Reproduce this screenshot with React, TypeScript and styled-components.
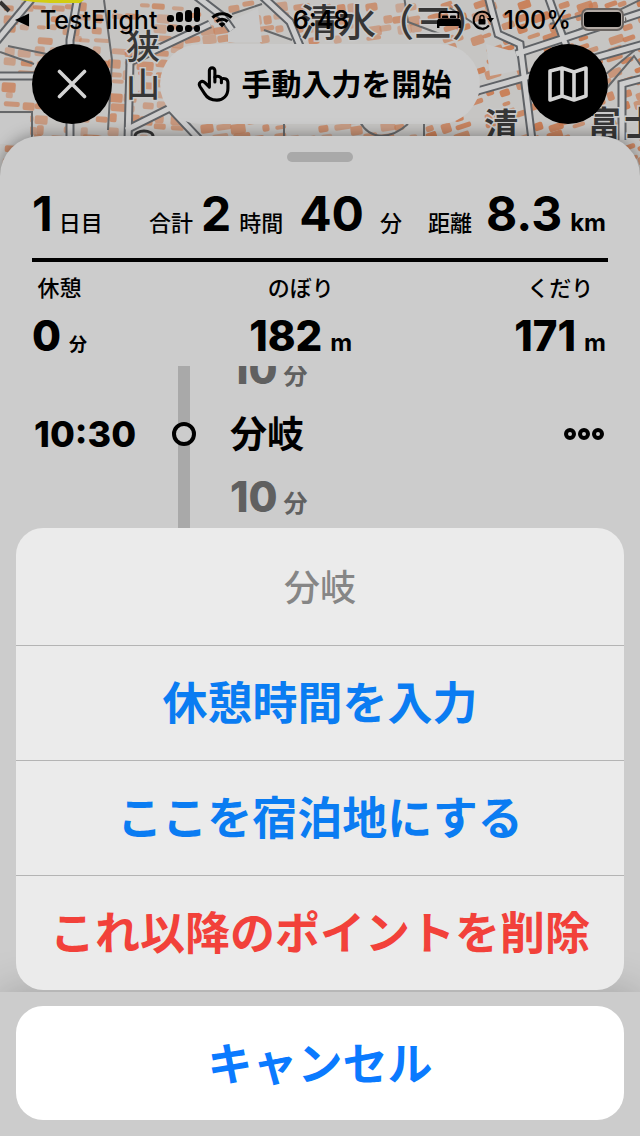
import React from "react";
import styled, { createGlobalStyle } from "styled-components";

const GlobalStyle = createGlobalStyle`
  *, *::before, *::after { box-sizing: border-box; }
  body {
    margin: 0;
    background: #cccccc;
    color: #000;
    font-family: Inter, "Noto Sans CJK JP", sans-serif;
  }
  button { font-family: inherit; border: 0; padding: 0; cursor: pointer; }
  svg { display: block; }
`;

const Page = styled.div`
  position: relative;
  display: flex;
  flex-direction: column;
  min-height: 100vh;
  overflow: hidden;
`;

const MapLayer = styled.svg`
  position: absolute;
  top: 0;
  left: 0;
  width: 100%;
  height: 200px;
`;

const StatusBar = styled.header`
  position: relative;
  display: grid;
  grid-template-columns: 1fr auto 1fr;
  align-items: center;
  height: 40px;
  padding: 0 12px 0 14px;
  font-size: 25px;
  font-weight: 500;
  line-height: 40px;
`;

const StatusGroup = styled.div<{ $end?: boolean }>`
  display: flex;
  align-items: center;
  justify-content: ${(p) => (p.$end ? "flex-end" : "flex-start")};
  gap: 10px;
`;

const Clock = styled.time`
  font-weight: 600;
`;

const Toolbar = styled.nav`
  position: relative;
  display: flex;
  align-items: center;
  justify-content: space-between;
  margin-top: 4px;
  padding: 0 32px;
`;

const RoundButton = styled.button`
  display: flex;
  align-items: center;
  justify-content: center;
  width: 80px;
  height: 80px;
  border-radius: 50%;
  background: #000;
  color: #d4d4d4;
`;

const PillButton = styled.button`
  display: flex;
  align-items: center;
  justify-content: center;
  gap: 12px;
  width: 320px;
  height: 80px;
  padding-left: 8px;
  border-radius: 40px;
  background: #cccccc;
  color: #000;
  font-size: 30px;
  font-weight: 700;
`;

const PillLabel = styled.span`
  padding-bottom: 4px;
`;

const Sheet = styled.main`
  position: relative;
  display: flex;
  flex: 1;
  flex-direction: column;
  margin-top: 12px;
  border-radius: 40px 40px 0 0;
  background: #cccccc;
  box-shadow: 0 0 16px rgba(0, 0, 0, 0.4);
`;

const Handle = styled.div`
  width: 66px;
  height: 10px;
  margin: 16px auto 0;
  border-radius: 5px;
  background: #a9a9a9;
`;

const Summary = styled.section`
  display: flex;
  align-items: baseline;
  justify-content: space-between;
  height: 100px;
  margin: 0 32px;
  padding: 20px 2px 0 0;
  border-bottom: 4px solid #000;
  line-height: 64px;
`;

const Totals = styled.div`
  display: flex;
  align-items: baseline;
  gap: 26px;
`;

const Measure = styled.div<{ $gap: number }>`
  display: flex;
  align-items: baseline;
  gap: ${(p) => p.$gap}px;
`;

const Figure = styled.span<{ $size: number }>`
  font-size: ${(p) => p.$size}px;
  font-weight: ${(p) => (p.$size > 42 ? 700 : 800)};
`;

const Unit = styled.span<{ $size?: number; $bold?: boolean }>`
  font-size: ${(p) => p.$size ?? 22}px;
  font-weight: ${(p) => (p.$bold ? 700 : 500)};
`;

const Stats = styled.dl`
  display: flex;
  justify-content: space-between;
  margin: 0 32px;
  padding: 10px 2px 6px 0;
`;

const Stat = styled.div`
  display: flex;
  flex-direction: column;
  align-items: center;
  gap: 8px;
`;

const StatLabel = styled.dt`
  font-size: 22px;
  font-weight: 500;
  line-height: 32px;
`;

const StatValue = styled.dd`
  display: flex;
  align-items: baseline;
  gap: 8px;
  height: 48px;
  margin: 0;
  line-height: 48px;
`;

const Timeline = styled.div`
  flex: 1;
  overflow: hidden;
`;

const Stops = styled.ol`
  margin: -28px 0 0;
  padding: 0;
  list-style: none;
`;

const StopRow = styled.li`
  display: grid;
  grid-template-columns: 136px 32px 1fr auto;
  align-items: center;
  height: 64px;
  padding: 0 32px;
`;

const StopTime = styled.time`
  padding-left: 2px;
  font-size: 36px;
  font-weight: 800;
`;

const Track = styled.div`
  display: flex;
  align-items: center;
  justify-content: center;
  height: 64px;
  background: linear-gradient(#a9a9a9, #a9a9a9) center / 12px 100% no-repeat;
`;

const Node = styled.span`
  width: 24px;
  height: 24px;
  border: 4px solid #000;
  border-radius: 50%;
  background: #cccccc;
`;

const StopName = styled.span`
  padding: 0 0 4px 30px;
  font-size: 37px;
  font-weight: 700;
`;

const Leg = styled.div`
  display: flex;
  align-items: baseline;
  gap: 6px;
  padding: 4px 0 0 30px;
  color: #606060;
  line-height: 48px;
`;

const MoreButton = styled.button`
  display: flex;
  align-items: center;
  height: 44px;
  padding: 0 4px;
  background: none;
  color: #000;
`;

const BottomBar = styled.footer`
  height: 144px;
  background: #cccccc;
  box-shadow: 0 0 40px rgba(0, 0, 0, 0.22);
`;

const ActionSheet = styled.div`
  position: absolute;
  right: 16px;
  bottom: 16px;
  left: 16px;
  display: flex;
  flex-direction: column;
  gap: 16px;
`;

const ActionGroup = styled.div`
  display: flex;
  flex-direction: column;
  overflow: hidden;
  border-radius: 27px;
  background: #ebebeb;
`;

const ActionTitle = styled.h2`
  margin: 0;
  padding-top: 4px;
  color: #868686;
  font-size: 36px;
  font-weight: 500;
  line-height: 113px;
  text-align: center;
`;

const ActionButton = styled.button<{ $danger?: boolean }>`
  height: 115px;
  padding-bottom: 6px;
  border-top: 1px solid #b4b4b4;
  background: none;
  color: ${(p) => (p.$danger ? "#f2413a" : "#0a7cf2")};
  font-size: 45px;
  font-weight: 700;
`;

const CancelButton = styled.button`
  height: 114px;
  padding-bottom: 4px;
  border-radius: 27px;
  background: #fff;
  color: #0a7aff;
  font-size: 45px;
  font-weight: 700;
`;

/* Small building footprints, scattered with a fixed seed so the map is stable. */
const buildings = (() => {
  let seed = 11;
  const next = () => {
    seed = (seed * 1103515245 + 12345) % 2147483648;
    return seed / 2147483648;
  };
  const list: { x: number; y: number; w: number; h: number; a: number; o: number }[] = [];
  for (let y = 2; y < 190; y += 11) {
    for (let x = 2; x < 640; x += 15) {
      if (next() < 0.3) continue;
      list.push({
        x: x + Math.round(next() * 6),
        y: y + Math.round(next() * 4),
        w: 7 + Math.round(next() * 10),
        h: 4 + Math.round(next() * 6),
        a: x > 420 ? -18 : x > 170 ? -8 : 4,
        o: (x > 420 ? 0.6 : 0.4) + next() * 0.35,
      });
    }
  }
  return list;
})();

const wideRoads = [
  "M-4 76H70",
  "M34 -4L-4 42",
  "M78 -4L70 40V140",
  "M196 -4L222 16 232 30",
  "M210 24L130 62 128 140",
  "M262 -4L290 22 300 46",
  "M488 -4L498 34 520 44 532 140",
  "M548 -4L566 46",
  "M644 44L474 92",
  "M644 12L516 54",
  "M126 130L170 108 200 140",
  "M622 140V84L644 78",
];

const thinRoads = [
  "M-4 112H32V140",
  "M0 52L34 64",
  "M8 46L66 58",
  "M104 0L112 60 108 130",
  "M232 14L262 4",
  "M264 30L292 40",
  "M284 120V140",
  "M360 122C370 140 390 140 408 124",
  "M424 124V140",
  "M404 -4L408 22 440 34",
  "M570 34L640 0",
  "M606 74L640 46",
  "M600 96L634 56 644 70",
  "M450 8L484 30",
  "M550 24L600 10",
];

function TownMap() {
  return (
    <MapLayer viewBox="0 0 640 200" preserveAspectRatio="xMidYMin slice" aria-hidden="true">
      <rect width="640" height="200" fill="#c6c5c3" />
      <g fill="#c97a50">
        {buildings.map((b, i) => (
          <rect
            key={i}
            x={b.x}
            y={b.y}
            width={b.w}
            height={b.h}
            rx="2"
            opacity={b.o}
            transform={`rotate(${b.a} ${b.x} ${b.y})`}
          />
        ))}
      </g>
      <g fill="#c9c9c9">
        <path d="M0 114h30v30H0zM228 22l30-14 4 34h-34zM486 44l30 8 4 18-30 6z" />
      </g>
      <g fill="none" stroke="#66686a" strokeWidth="2">
        {thinRoads.map((d) => (
          <path key={d} d={d} />
        ))}
      </g>
      <g fill="none" stroke="#5f6266" strokeWidth="9">
        {wideRoads.map((d) => (
          <path key={d} d={d} />
        ))}
      </g>
      <g fill="none" stroke="#cdcdcd" strokeWidth="5">
        {wideRoads.map((d) => (
          <path key={d} d={d} />
        ))}
      </g>
      <path d="M20 0H84L80 3H50L34 2Z" fill="#d2cc12" />
      <path d="M0 2L9 11" stroke="#333" strokeWidth="4" />
      <g
        fill="#363636"
        stroke="#c9c9c9"
        strokeWidth="3"
        paintOrder="stroke"
        fontFamily='"Noto Sans CJK JP", sans-serif'
        fontWeight="500"
      >
        <text x="126" y="59" fontSize="34">狭</text>
        <text x="126" y="97" fontSize="34">山</text>
        <text x="300" y="36" fontSize="38">清水（三）</text>
        <text x="484" y="138" fontSize="34" fontWeight="700">清</text>
        <text x="587" y="136" fontSize="34" fontWeight="700">富</text>
        <text x="624" y="136" fontSize="34" fontWeight="700">士</text>
      </g>
      <path d="M135 136a9 5 0 0 1 18 0" fill="none" stroke="#333" strokeWidth="3" />
    </MapLayer>
  );
}

const BackIcon = () => (
  <svg width="16" height="16" viewBox="0 0 17 16" aria-hidden="true">
    <path d="M1 8L16 1V15Z" fill="currentColor" />
  </svg>
);

const SignalIcon = () => (
  <svg width="34" height="26" viewBox="0 0 34 26" fill="currentColor" aria-hidden="true">
    <rect x="0" y="8" width="7" height="7" rx="3" />
    <rect x="9" y="5" width="7" height="10" rx="3" />
    <rect x="18" y="3" width="7" height="12" rx="3" />
    <rect x="27" y="0" width="6" height="15" rx="3" />
    <rect x="0" y="18" width="7" height="7" rx="3" />
    <rect x="9" y="18" width="7" height="7" rx="3" />
    <rect x="18" y="18" width="7" height="7" rx="3" />
    <rect x="27" y="18" width="6" height="7" rx="3" />
  </svg>
);

const WifiIcon = () => (
  <svg width="22" height="16" viewBox="0 0 22 16" aria-hidden="true">
    <g fill="none" stroke="currentColor" strokeWidth="3">
      <path d="M1.4 5.6a13.6 13.6 0 0 1 19.2 0" />
      <path d="M5.4 9.6a8 8 0 0 1 11.2 0" />
    </g>
    <path d="M11 15.5L7.6 12a4.8 4.8 0 0 1 6.8 0Z" fill="currentColor" />
  </svg>
);

const BedIcon = () => (
  <svg width="26" height="18" viewBox="0 0 26 18" aria-hidden="true">
    <path d="M3.5 7V3Q3.5 1 5.5 1H20.5Q22.5 1 22.5 3V7" fill="none" stroke="currentColor" strokeWidth="2" />
    <path d="M6 7V5.5Q6 4.500 7 4.500H11Q12 4.500 12 5.500V7ZM14 7V5.500Q14 4.500 15 4.500H19Q20 4.500 20 5.500V7Z" fill="currentColor" />
    <path d="M1 17V11Q1 7.500 4 7.500H22Q25 7.500 25 11V17H22.600V15H3.400V17Z" fill="currentColor" />
  </svg>
);

const RotationLockIcon = () => (
  <svg width="22" height="20" viewBox="0 0 22 20" aria-hidden="true">
    <path d="M18.4 8A8.500 8.500 0 1 0 17 15.300" fill="none" stroke="currentColor" strokeWidth="2" />
    <path d="M15 8H22L18.500 12.500Z" fill="currentColor" />
    <rect x="6.500" y="9" width="7" height="5.500" rx="1" fill="currentColor" />
    <path d="M8 9V7.500a2 2 0 0 1 4 0V9" fill="none" stroke="currentColor" strokeWidth="1.400" />
  </svg>
);

const BatteryIcon = () => (
  <svg width="47" height="24" viewBox="0 0 47 24" aria-hidden="true">
    <rect x="1" y="1" width="41" height="21" rx="6" fill="#b3aaa5" stroke="#6b6562" strokeWidth="2" />
    <rect x="3" y="4" width="37" height="15" rx="3" fill="currentColor" />
    <path d="M44 8.500q3 3 0 7z" fill="#6b6562" />
  </svg>
);

const CloseIcon = () => (
  <svg width="30" height="30" viewBox="0 0 30 30" aria-hidden="true">
    <path d="M2.500 2.500L27.500 27.500M27.500 2.500L2.500 27.500" stroke="currentColor" strokeWidth="3.600" strokeLinecap="round" />
  </svg>
);

const HandIcon = () => (
  <svg width="33" height="36" viewBox="0 0 96 104" aria-hidden="true">
    <g fill="none" stroke="currentColor" strokeWidth="9" strokeLinecap="round" strokeLinejoin="round">
      <path d="M36 54V13a8 8 0 0 1 16 0V32C60 27 69 30 71 37C79 34 90 37 90 48V64C90 86 76 99 58 99C38 99 29 92 22 80L9 60C2 48 14 40 23 48L36 61V54" />
      <path d="M52 32V46M71 37V48" />
    </g>
  </svg>
);

const MapIcon = () => (
  <svg width="40" height="36" viewBox="0 0 40 36" aria-hidden="true">
    <path
      d="M2 5L14 2L26 6L38 2V30L26 34L14 30L2 34ZM14 2V30M26 6V34"
      fill="none"
      stroke="currentColor"
      strokeWidth="3.600"
      strokeLinejoin="round"
    />
  </svg>
);

const MoreIcon = () => (
  <svg width="40" height="12" viewBox="0 0 40 12" aria-hidden="true">
    <g fill="none" stroke="currentColor" strokeWidth="4">
      <circle cx="6" cy="6" r="4" />
      <circle cx="20" cy="6" r="4" />
      <circle cx="34" cy="6" r="4" />
    </g>
  </svg>
);

const stats = [
  { label: "休憩", value: "0", unit: "分", size: 18 },
  { label: "のぼり", value: "182", unit: "m", size: 24 },
  { label: "くだり", value: "171", unit: "m", size: 24 },
];

function LegRow({ minutes }: { minutes: number }) {
  return (
    <StopRow>
      <span />
      <Track />
      <Leg>
        <Figure $size={42}>{minutes}</Figure>
        <Unit $size={24} $bold>分</Unit>
      </Leg>
    </StopRow>
  );
}

export default function App() {
  return (
    <Page>
      <GlobalStyle />
      <TownMap />
      <StatusBar>
        <StatusGroup>
          <BackIcon />
          <span>TestFlight</span>
          <SignalIcon />
          <WifiIcon />
        </StatusGroup>
        <Clock>6:48</Clock>
        <StatusGroup $end>
          <BedIcon />
          <RotationLockIcon />
          <span>100%</span>
          <BatteryIcon />
        </StatusGroup>
      </StatusBar>

      <Toolbar>
        <RoundButton aria-label="閉じる">
          <CloseIcon />
        </RoundButton>
        <PillButton>
          <HandIcon />
          <PillLabel>手動入力を開始</PillLabel>
        </PillButton>
        <RoundButton aria-label="地図">
          <MapIcon />
        </RoundButton>
      </Toolbar>

      <Sheet>
        <Handle />
        <Summary>
          <Measure $gap={6}>
            <Figure $size={48}>1</Figure>
            <Unit>日目</Unit>
          </Measure>
          <Totals>
            <Measure $gap={16}>
              <Measure $gap={8}>
                <Unit>合計</Unit>
                <Figure $size={48}>2</Figure>
                <Unit>時間</Unit>
              </Measure>
              <Figure $size={48}>40</Figure>
              <Unit>分</Unit>
            </Measure>
            <Measure $gap={14}>
              <Unit>距離</Unit>
              <Measure $gap={8}>
                <Figure $size={48}>8.3</Figure>
                <Unit $size={24} $bold>km</Unit>
              </Measure>
            </Measure>
          </Totals>
        </Summary>
        <Stats>
          {stats.map((s) => (
            <Stat key={s.label}>
              <StatLabel>{s.label}</StatLabel>
              <StatValue>
                <Figure $size={42}>{s.value}</Figure>
                <Unit $size={s.size} $bold>{s.unit}</Unit>
              </StatValue>
            </Stat>
          ))}
        </Stats>
        <Timeline>
          <Stops>
            <LegRow minutes={10} />
            <StopRow>
              <StopTime>10:30</StopTime>
              <Track>
                <Node />
              </Track>
              <StopName>分岐</StopName>
              <MoreButton aria-label="メニュー">
                <MoreIcon />
              </MoreButton>
            </StopRow>
            <LegRow minutes={10} />
          </Stops>
        </Timeline>
        <BottomBar />
      </Sheet>

      <ActionSheet role="dialog" aria-labelledby="action-title">
        <ActionGroup>
          <ActionTitle id="action-title">分岐</ActionTitle>
          <ActionButton>休憩時間を入力</ActionButton>
          <ActionButton>ここを宿泊地にする</ActionButton>
          <ActionButton $danger>これ以降のポイントを削除</ActionButton>
        </ActionGroup>
        <CancelButton>キャンセル</CancelButton>
      </ActionSheet>
    </Page>
  );
}
